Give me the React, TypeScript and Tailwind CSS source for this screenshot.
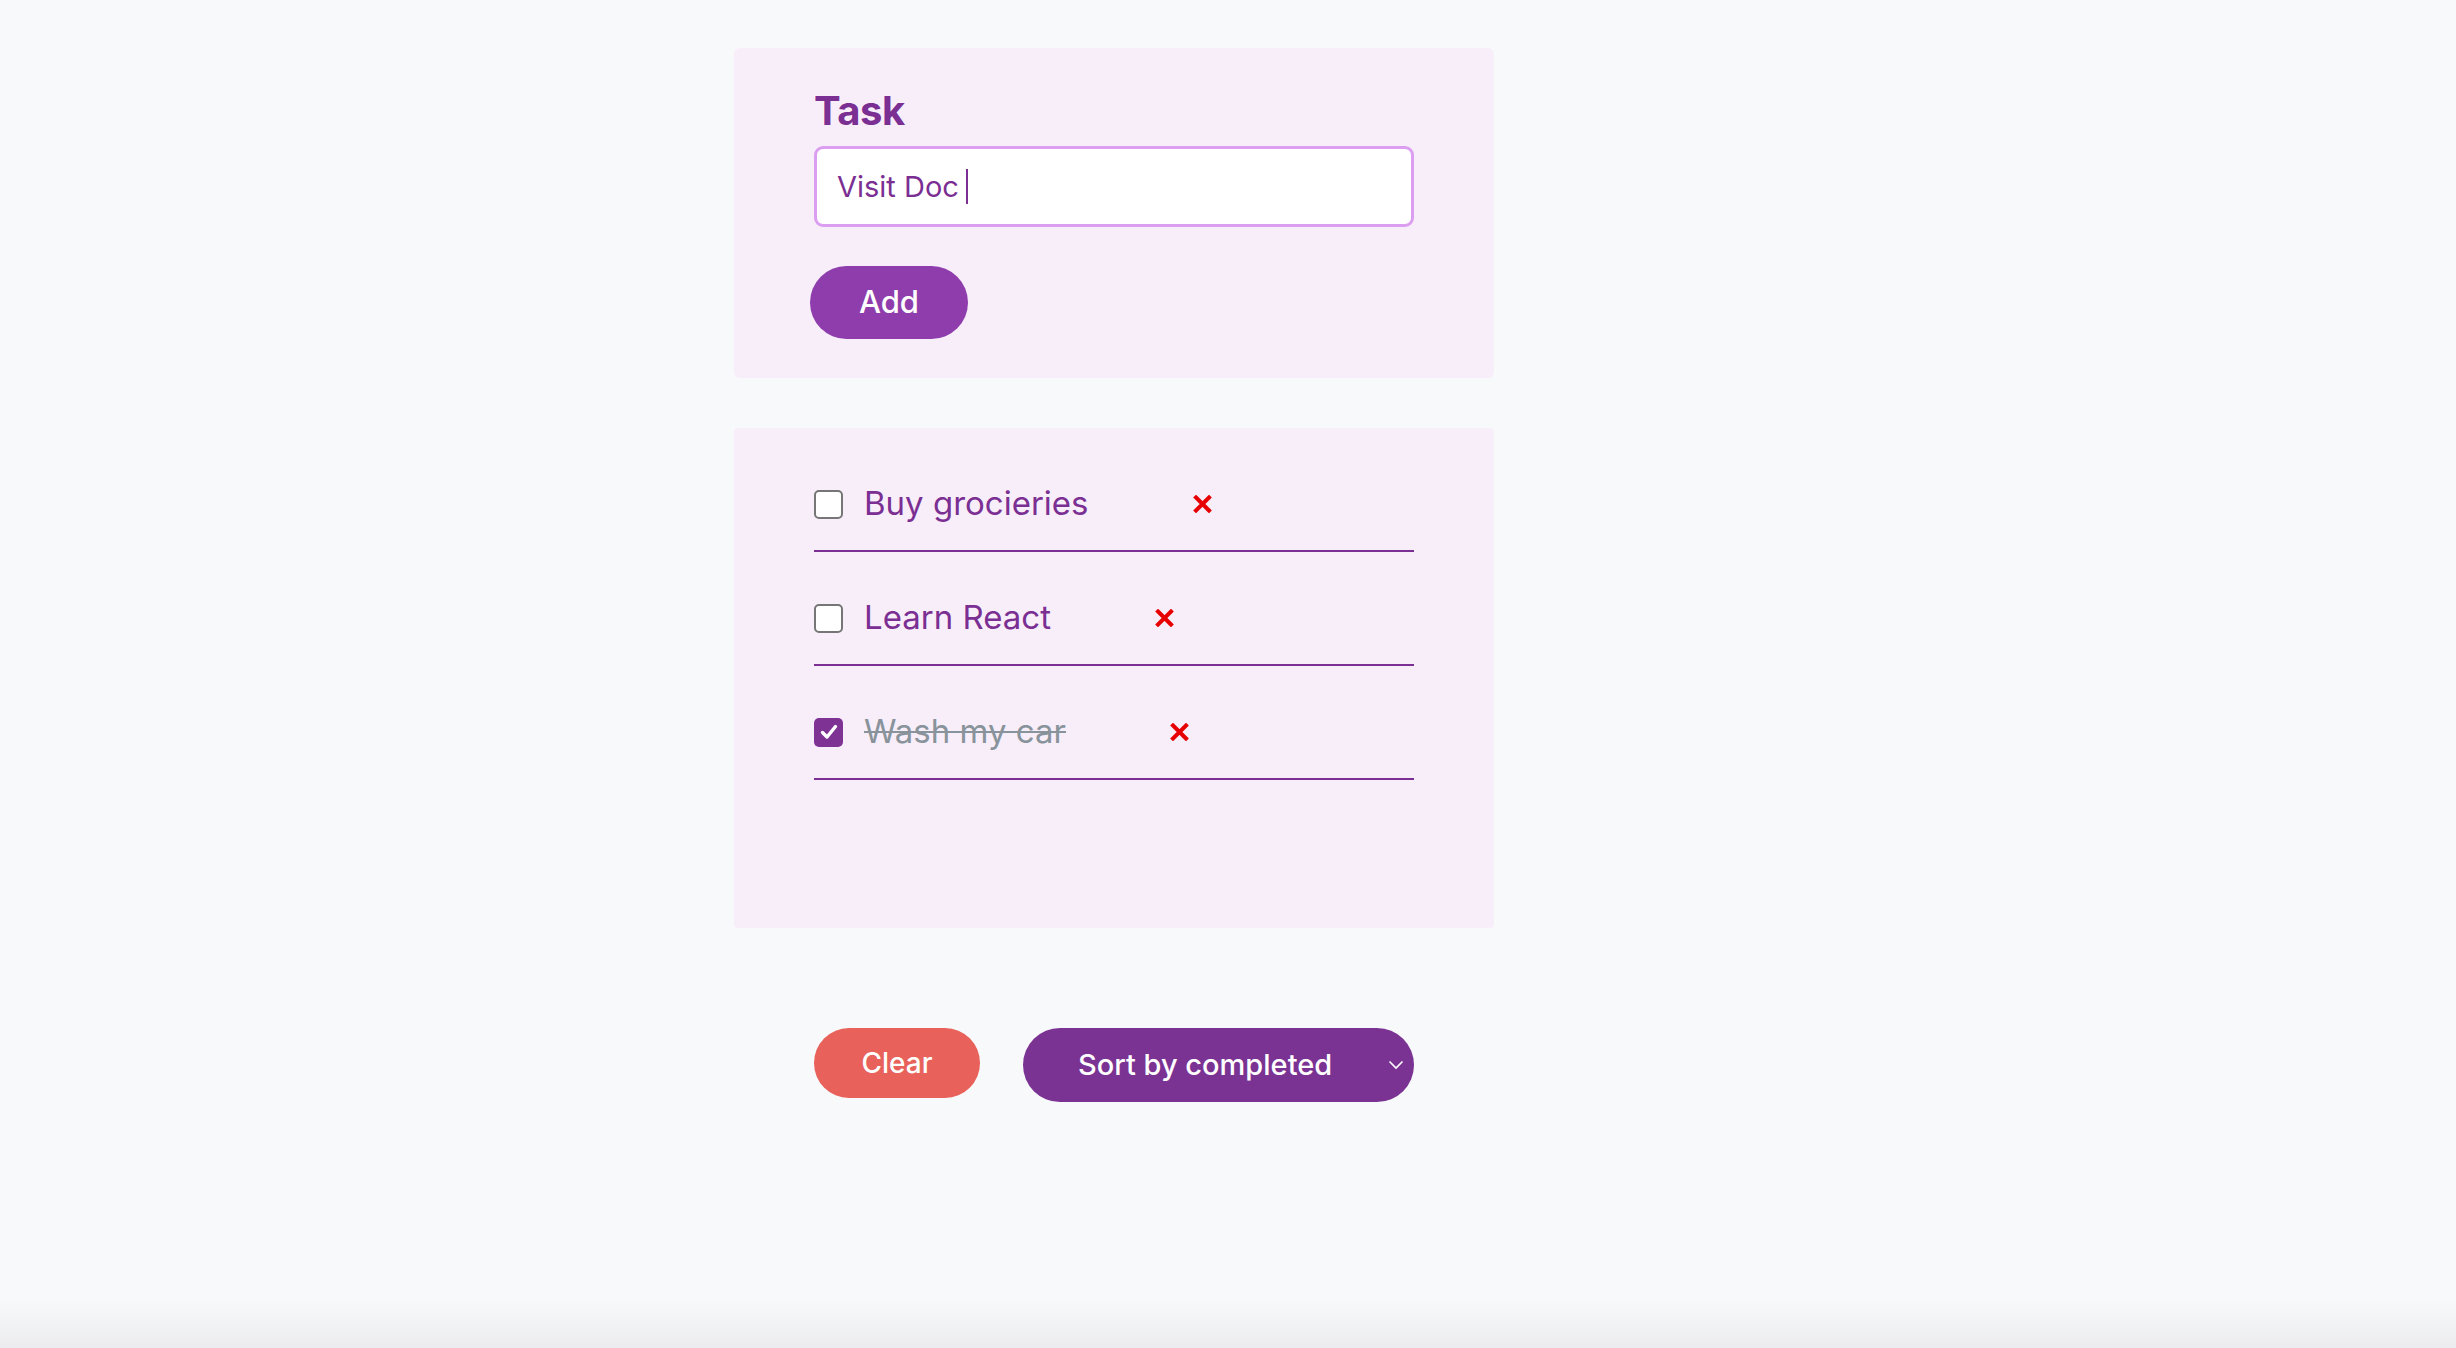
import React from "react";

const font = { fontFamily: "Inter, 'Noto Sans', sans-serif" };

function XIcon() {
  return (
    <svg width="19" height="18" viewBox="0 0 19 18" className="shrink-0">
      <path d="M3 2.5 L16 15.5 M16 2.5 L3 15.5" stroke="#e60000" strokeWidth="4" strokeLinecap="square" />
    </svg>
  );
}

function Checkbox({ checked }: { checked: boolean }) {
  if (checked) {
    return (
      <div className="w-[29px] h-[29px] rounded-[5px] bg-[#7e3294] flex items-center justify-center shrink-0">
        <svg width="20" height="20" viewBox="0 0 20 20">
          <path d="M3.5 10.5 L8 15 L16.5 4.5" stroke="#fff" strokeWidth="3.4" fill="none" strokeLinecap="round" strokeLinejoin="round" />
        </svg>
      </div>
    );
  }
  return <div className="w-[29px] h-[29px] rounded-[5px] border-2 border-[#767676] bg-white shrink-0" />;
}

const tasks = [
  { text: "Buy grocieries", done: false },
  { text: "Learn React", done: false },
  { text: "Wash my car", done: true },
];

export default function App() {
  return (
    <div className="h-[1348px] w-full bg-[#f8f9fb] flex flex-col overflow-hidden" style={font}>
      <div className="flex-1 pl-[734px] pt-[48px]">
        <div className="w-[760px]">
          <div className="bg-[#f7eefa] rounded-[6px] pl-[80px] pt-[39px] pb-[39px]">
            <div className="text-[40px] leading-[48px] font-bold text-[#7b2f93] tracking-[-0.5px]">Task</div>
            <div className="mt-[11px] w-[600px] h-[81px] bg-white border-[3px] border-[#dc9ef0] rounded-[9px] flex items-center pl-[20px]">
              <span className="text-[29px] text-[#7b2f93]">Visit Doc</span>
              <span className="ml-[7px] w-[2px] h-[35px] bg-[#7b2f93]" />
            </div>
            <button className="mt-[39px] ml-[-4px] w-[158px] h-[73px] rounded-full bg-[#8f3dac] text-white text-[31px] font-medium flex items-center justify-center">
              Add
            </button>
          </div>

          <div className="mt-[50px] h-[500px] bg-[#f7eefa] rounded-[4px] pl-[80px] pt-[48px]">
            <div className="w-[600px] flex flex-col gap-[38px]">
              {tasks.map((t) => (
                <div key={t.text} className="border-b-2 border-[#7b2f93] pb-[18px]">
                  <div className="h-[56px] flex items-center">
                    <Checkbox checked={t.done} />
                    <span
                      className={
                        t.done
                          ? "ml-[21px] text-[33px] text-[#89939b] line-through decoration-2"
                          : "ml-[21px] text-[33px] text-[#7b2f93]"
                      }
                    >
                      {t.text}
                    </span>
                    <span className="ml-[104px] flex items-center">
                      <XIcon />
                    </span>
                  </div>
                </div>
              ))}
            </div>
          </div>

          <div className="mt-[100px] pl-[80px] flex items-start gap-[43px]">
            <button className="w-[166px] h-[70px] rounded-full bg-[#e8615a] text-white text-[28px] font-medium flex items-center justify-center">
              Clear
            </button>
            <div className="w-[391px] h-[74px] rounded-full bg-[#7b3393] text-white flex items-center pl-[55px] pr-[10px]">
              <span className="text-[29px] font-medium flex-1">Sort by completed</span>
              <svg width="16" height="10" viewBox="0 0 16 10">
                <path d="M1.5 1.5 L8 8 L14.5 1.5" stroke="#fff" strokeWidth="1.6" fill="none" />
              </svg>
            </div>
          </div>
        </div>
      </div>
      <div className="h-[48px] bg-gradient-to-b from-[#f8f9fb] to-[#ececee]" />
    </div>
  );
}
